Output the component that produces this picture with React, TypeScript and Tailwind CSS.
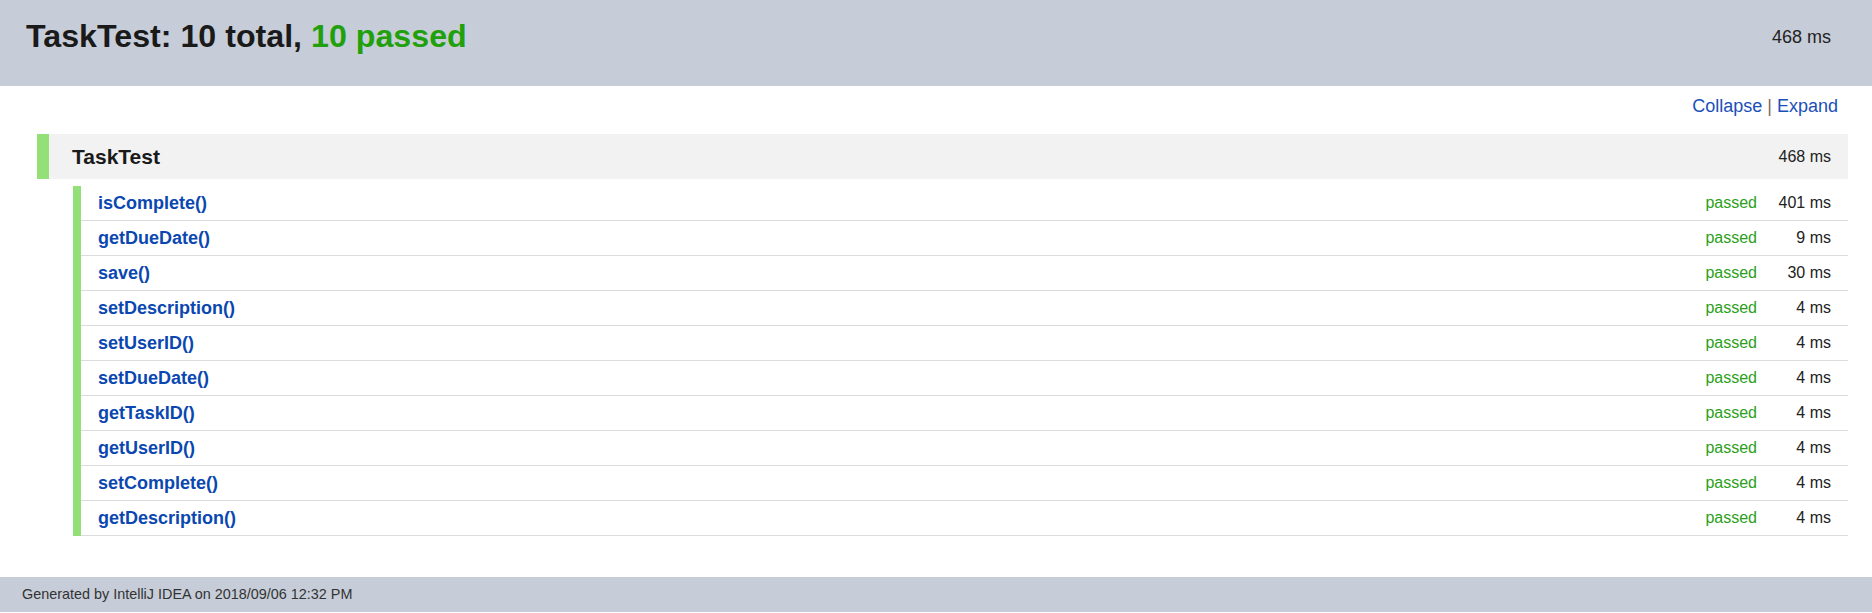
const tests = [
  { name: 'isComplete()', ms: '401 ms' },
  { name: 'getDueDate()', ms: '9 ms' },
  { name: 'save()', ms: '30 ms' },
  { name: 'setDescription()', ms: '4 ms' },
  { name: 'setUserID()', ms: '4 ms' },
  { name: 'setDueDate()', ms: '4 ms' },
  { name: 'getTaskID()', ms: '4 ms' },
  { name: 'getUserID()', ms: '4 ms' },
  { name: 'setComplete()', ms: '4 ms' },
  { name: 'getDescription()', ms: '4 ms' },
]

export default function App() {
  return (
    <div className="w-[1872px] bg-white text-[#1a1a1a]" style={{ fontFamily: '"Liberation Sans", Arial, sans-serif' }}>
      {/* header */}
      <div className="flex h-[86px] items-start justify-between bg-[#c6cdd8] pl-[26px] pr-[41px] pt-[18px]">
        <h1 className="text-[32.2px] font-bold leading-[37px]">
          TaskTest: 10 total, <span className="text-[#21a00c]">10 passed</span>
        </h1>
        <div className="mt-[9px] text-[18px] leading-[21px] text-[#222]">468 ms</div>
      </div>

      {/* body */}
      <div className="pl-[37px] pr-[24px]">
        <div className="mt-[10px] pr-[10px] text-right text-[18px] leading-[21px]">
          <a href="#" className="text-[#1b4fb8]">Collapse</a>
          <span className="text-[#7a6a5e]"> | </span>
          <a href="#" className="text-[#1b4fb8]">Expand</a>
        </div>

        {/* suite */}
        <div className="mt-[17px] flex">
          <div className="w-[12px] bg-[#94e078]" />
          <div className="flex h-[45px] flex-1 items-center justify-between bg-[#f2f2f2] pl-[23px] pr-[17px]">
            <span className="text-[21px] font-bold">TaskTest</span>
            <span className="text-[16px] text-[#222]">468 ms</span>
          </div>
        </div>

        {/* tests */}
        <div className="ml-[36px] mt-[7px]">
          {tests.map((t) => (
            <div key={t.name} className="flex">
              <div className="w-[8px] bg-[#94e078]" />
              <div className="flex h-[35px] flex-1 items-center justify-between border-b border-[#dcdcdc] pl-[17px] pr-[17px]">
                <a href="#" className="text-[18px] font-bold text-[#0b47b0]">{t.name}</a>
                <div className="flex items-center text-[16px]">
                  <span className="text-[#2ba01a]">passed</span>
                  <span className="w-[74px] text-right text-[#222]">{t.ms}</span>
                </div>
              </div>
            </div>
          ))}
        </div>
      </div>

      {/* footer */}
      <div className="mt-[41px] flex h-[35px] items-center bg-[#c6cdd8] pl-[22px] text-[14.4px] text-[#333]">
        Generated by IntelliJ IDEA on 2018/09/06 12:32 PM
      </div>
    </div>
  )
}
